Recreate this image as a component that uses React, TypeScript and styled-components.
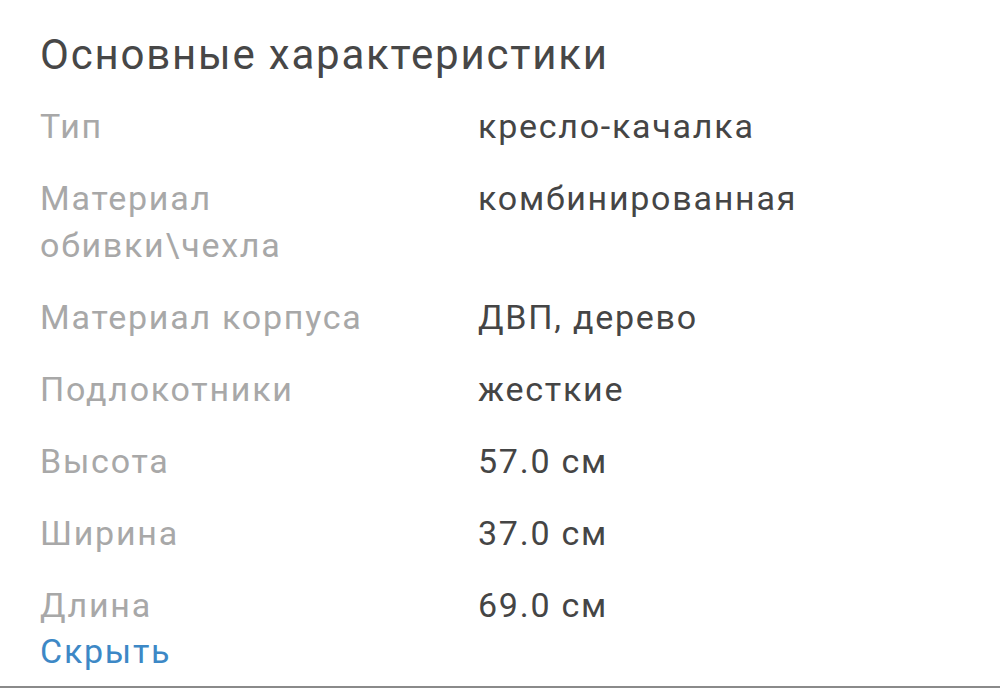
import React from "react";
import styled, { createGlobalStyle } from "styled-components";

const Global = createGlobalStyle`
  html, body { margin: 0; padding: 0; background: #fff; }
  body { font-family: Roboto, "Noto Sans", sans-serif; }
`;

const Page = styled.div`
  width: 1000px;
  height: 688px;
  box-sizing: border-box;
  padding: 27px 40px 0 40px;
  border-bottom: 2px solid #8a8a8a;
  overflow: hidden;
  display: flex;
  flex-direction: column;
`;

const Title = styled.h2`
  margin: 0 0 20px 0;
  font-weight: 400;
  font-size: 42px;
  letter-spacing: 1.8px;
  line-height: 56px;
  color: #474747;
`;

const Specs = styled.dl`
  margin: 0;
  display: grid;
  grid-template-columns: 400px 1fr;
  column-gap: 38px;
  row-gap: 25px;
`;

const Label = styled.dt`
  margin: 0;
  font-size: 34px;
  letter-spacing: 1.75px;
  line-height: 47px;
  color: #a8a8a8;
`;

const Value = styled.dd`
  margin: 0;
  font-size: 34px;
  letter-spacing: 1.75px;
  line-height: 47px;
  color: #454545;
`;

const Toggle = styled.a`
  font-size: 34px;
  letter-spacing: 1.75px;
  line-height: 45px;
  color: #3d88c6;
  text-decoration: none;
  margin-top: 0;
`;

const rows: [string, string][] = [
  ["Тип", "кресло-качалка"],
  ["Материал обивки\\чехла", "комбинированная"],
  ["Материал корпуса", "ДВП, дерево"],
  ["Подлокотники", "жесткие"],
  ["Высота", "57.0 см"],
  ["Ширина", "37.0 см"],
  ["Длина", "69.0 см"],
];

export default function App() {
  return (
    <>
      <Global />
      <Page>
        <Title>Основные характеристики</Title>
        <Specs>
          {rows.map(([l, v]) => (
            <React.Fragment key={l}>
              <Label>{l}</Label>
              <Value>{v}</Value>
            </React.Fragment>
          ))}
        </Specs>
        <Toggle href="#">Скрыть</Toggle>
      </Page>
    </>
  );
}
